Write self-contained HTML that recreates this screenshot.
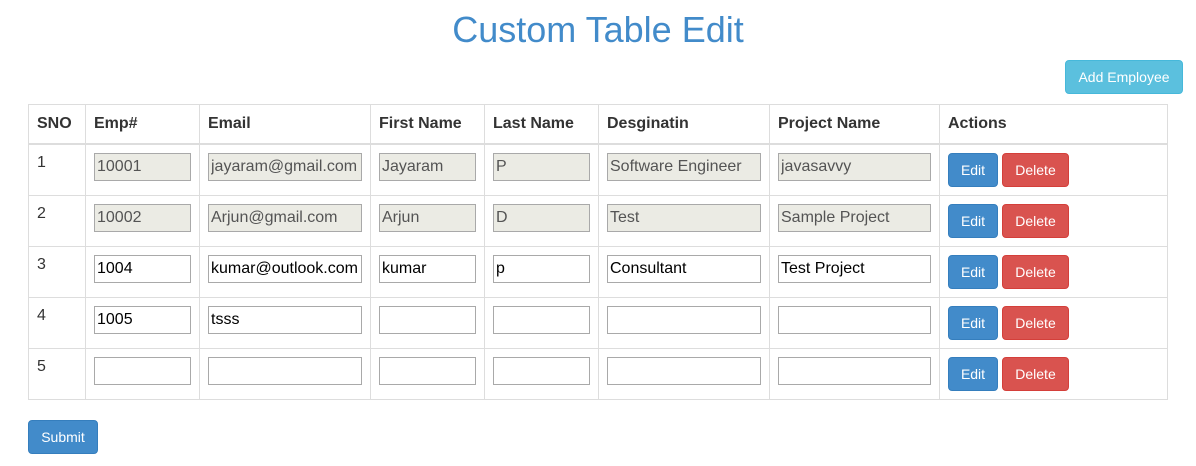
<!DOCTYPE html>
<html><head><style>
body{margin:0;background:#fff;font-family:"Liberation Sans",Arial,sans-serif;color:#333;width:1196px;height:466px;position:relative;overflow:hidden}
h1{position:absolute;top:10px;left:0;width:1196px;text-align:center;margin:0;font-weight:normal;font-size:36px;color:#428bca;line-height:40px}
.btn{position:absolute;color:#fff;font-size:14px;border-radius:4px;box-sizing:border-box;text-align:center;line-height:32px;border:1px solid}
table{position:absolute;left:28px;top:104px;border-collapse:collapse;width:1140px}
td,th{border:1px solid #ddd;padding:0 8px;box-sizing:border-box;vertical-align:top;text-align:left;font-size:16px;position:relative}
th{height:39px;border-bottom:2px solid #ddd;line-height:38px}
td{height:51px;line-height:20px;padding-top:8px}
input{box-sizing:border-box;height:28px;border:1px solid #a9a9a9;font:16px "Liberation Sans",Arial,sans-serif;padding:0 2px;color:#000;margin:0;display:block}
input.d{background:#ebebe4;color:#545454}
.e,.x{display:inline-block;position:relative;color:#fff;font-size:14px;border-radius:4px;height:34px;line-height:32px;text-align:center;box-sizing:border-box;border:1px solid;vertical-align:top}
.e{background:#428bca;border-color:#357ebd;width:50px}
.x{background:#d9534f;border-color:#d43f3a;width:67px;margin-left:4px}
</style></head><body>
<h1>Custom Table Edit</h1>
<div class="btn" style="left:1065px;top:60px;width:118px;height:34px;background:#5bc0de;border-color:#46b8da">Add Employee</div>
<table>
<tr><th style="width:57px">SNO</th><th style="width:114px">Emp#</th><th style="width:171px">Email</th><th style="width:114px">First Name</th><th style="width:114px">Last Name</th><th style="width:171px">Desginatin</th><th style="width:170px">Project Name</th><th>Actions</th></tr>
<tr><td>1</td><td><input class="d" style="width:97px" value="10001"></td><td><input class="d" style="width:154px" value="jayaram@gmail.com"></td><td><input class="d" style="width:97px" value="Jayaram"></td><td><input class="d" style="width:97px" value="P"></td><td><input class="d" style="width:154px" value="Software Engineer"></td><td><input class="d" style="width:153px" value="javasavvy"></td><td><span class="e">Edit</span><span class="x">Delete</span></td></tr>
<tr><td>2</td><td><input class="d" style="width:97px" value="10002"></td><td><input class="d" style="width:154px" value="Arjun@gmail.com"></td><td><input class="d" style="width:97px" value="Arjun"></td><td><input class="d" style="width:97px" value="D"></td><td><input class="d" style="width:154px" value="Test"></td><td><input class="d" style="width:153px" value="Sample Project"></td><td><span class="e">Edit</span><span class="x">Delete</span></td></tr>
<tr><td>3</td><td><input style="width:97px" value="1004"></td><td><input style="width:154px" value="kumar@outlook.com"></td><td><input style="width:97px" value="kumar"></td><td><input style="width:97px" value="p"></td><td><input style="width:154px" value="Consultant"></td><td><input style="width:153px" value="Test Project"></td><td><span class="e">Edit</span><span class="x">Delete</span></td></tr>
<tr><td>4</td><td><input style="width:97px" value="1005"></td><td><input style="width:154px" value="tsss"></td><td><input style="width:97px"></td><td><input style="width:97px"></td><td><input style="width:154px"></td><td><input style="width:153px"></td><td><span class="e">Edit</span><span class="x">Delete</span></td></tr>
<tr><td>5</td><td><input style="width:97px"></td><td><input style="width:154px"></td><td><input style="width:97px"></td><td><input style="width:97px"></td><td><input style="width:154px"></td><td><input style="width:153px"></td><td><span class="e">Edit</span><span class="x">Delete</span></td></tr>
</table>
<div class="btn" style="left:28px;top:420px;width:70px;height:34px;background:#428bca;border-color:#357ebd">Submit</div>
</body></html>
